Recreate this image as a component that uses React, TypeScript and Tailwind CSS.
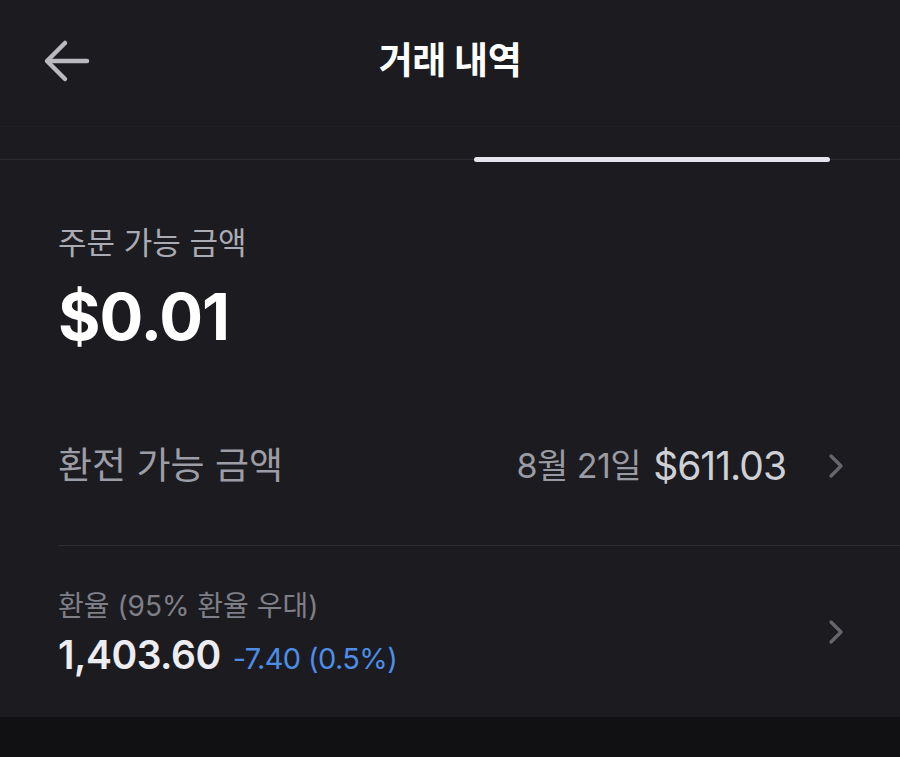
import { ChevronRight } from "lucide-react"

const font = { fontFamily: '"Inter", "Noto Sans CJK KR", sans-serif' }

function BackArrow() {
  return (
    <svg width="48" height="44" viewBox="0 0 48 44" fill="none" stroke="#b9b9bf" strokeWidth="4.5" strokeLinecap="round" strokeLinejoin="round">
      <path d="M44 22H6" />
      <path d="M22 4L4 22L22 40" />
    </svg>
  )
}

export default function App() {
  return (
    <div className="w-[900px] h-[757px] bg-[#1b1b20] flex flex-col overflow-hidden" style={font}>
      {/* Header */}
      <header className="h-[127px] flex items-center relative border-b border-[#202026]">
        <div className="pl-[43px] pb-[4px]">
          <BackArrow />
        </div>
        <h1 className="absolute left-0 right-0 text-center text-[37px] font-bold text-white tracking-[-0.5px] pb-[4px]">
          거래 내역
        </h1>
      </header>

      {/* Tabs */}
      <div className="h-[33px] flex items-end border-b border-[#2c2c32]">
        <div className="flex-1" />
        <div className="w-[356px] h-[5px] bg-[#e4e4ec] rounded-full mr-[70px] mb-[-3px]" />
      </div>

      {/* Balance */}
      <section className="px-[58px] pt-[64px]">
        <div className="text-[31px] leading-[38px] text-[#ababb3]">주문 가능 금액</div>
        <div className="text-[65px] leading-[70px] font-bold text-white mt-[20px] tracking-[-1px]">$0.01</div>
      </section>

      {/* Exchangeable */}
      <div className="ml-[58px] mt-[72px] h-[122px] flex items-start pt-[18px] border-b border-[#2e2e34]">
        <div className="text-[37px] leading-[48px] text-[#9d9da5] flex-1">환전 가능 금액</div>
        <div className="flex items-center mr-[48px]">
          <span className="text-[34px] leading-[48px] text-[#9a9aa2] tracking-[-0.5px]">8월 21일</span>
          <span className="text-[39px] leading-[48px] text-[#cfcfd6] ml-[12px] tracking-[-1px]">$611.03</span>
          <ChevronRight className="ml-[30px] mr-[-4px] text-[#66666c]" size={40} strokeWidth={2} />
        </div>
      </div>

      {/* Exchange rate */}
      <div className="pl-[58px] pr-[48px] pt-[42px] flex items-center">
        <div className="flex-1">
          <div className="text-[28px] leading-[36px] text-[#7f7f87]">환율 (95% 환율 우대)</div>
          <div className="flex items-baseline mt-[8px]">
            <span className="text-[39px] leading-[46px] font-semibold text-[#ececf1] tracking-[-0.5px]">1,403.60</span>
            <span className="text-[29px] leading-[46px] text-[#4d8de6] ml-[12px] tracking-[-0.6px]">-7.40 (0.5%)</span>
          </div>
        </div>
        <ChevronRight className="text-[#66666c] mr-[-4px] mt-[-6px]" size={40} strokeWidth={2} />
      </div>

      <div className="flex-1" />
      <div className="h-[40px] bg-[#111114]" />
    </div>
  )
}
